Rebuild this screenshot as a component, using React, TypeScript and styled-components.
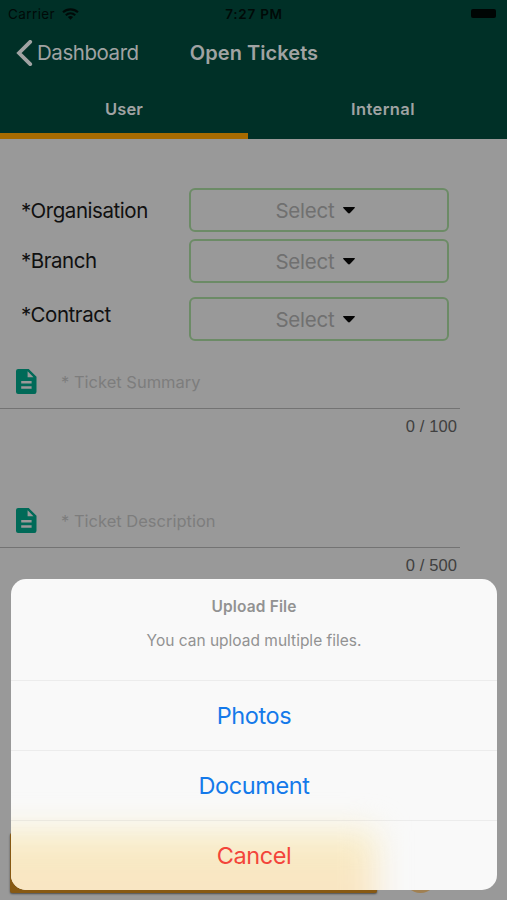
import React from "react";
import styled, { createGlobalStyle } from "styled-components";

const GlobalStyle = createGlobalStyle`
  *, *::before, *::after { box-sizing: border-box; }
  html, body { margin: 0; background: #999999; }
  body { font-family: Inter, "Liberation Sans", sans-serif; }
`;

const Screen = styled.div`
  position: relative;
  width: 507px;
  height: 900px;
  overflow: hidden;
  background: #999999;
`;

const Header = styled.header`
  height: 139px;
  background: #003027;
  color: #a0a3a3;
`;

const StatusBar = styled.div`
  display: grid;
  grid-template-columns: 1fr auto 1fr;
  align-items: center;
  height: 27px;
  padding: 0 11px 0 8px;
  color: #000a08;
`;

const Carrier = styled.div`
  display: flex;
  align-items: center;
  gap: 7px;
  font-size: 13.5px;
  letter-spacing: 0.4px;
`;

const Clock = styled.div`
  padding-left: 4px;
  font-size: 13.5px;
  font-weight: 600;
  letter-spacing: 0.75px;
`;

const Battery = styled.div`
  justify-self: end;
  width: 25px;
  height: 9px;
  border-radius: 2px;
  background: #000504;
`;

const NavBar = styled.div`
  display: grid;
  grid-template-columns: 1fr auto 1fr;
  align-items: center;
  height: 51px;
  padding: 0 15px 0 16px;
`;

const BackButton = styled.div`
  display: flex;
  align-items: center;
  gap: 4px;
  font-size: 20.5px;
  letter-spacing: -0.45px;
`;

const Title = styled.div`
  font-size: 20px;
  font-weight: 600;
  letter-spacing: 0.05px;
`;

const Tabs = styled.div`
  display: flex;
  height: 61px;
`;

const Tab = styled.div<{ $active?: boolean }>`
  width: ${(p) => (p.$active ? 248 : 259)}px;
  height: 61px;
  padding: 7px 0 ${(p) => (p.$active ? 0 : 6)}px ${(p) => (p.$active ? 0 : 11)}px;
  border-bottom: ${(p) => (p.$active ? "6px solid #a86b00" : "none")};
  display: flex;
  align-items: center;
  justify-content: center;
  font-size: 16.5px;
  font-weight: 600;
  letter-spacing: ${(p) => (p.$active ? 0.1 : 0.4)}px;
`;

const Form = styled.main`
  padding-top: 49px;
`;

const Field = styled.div<{ $gap: number; $shift: number }>`
  display: flex;
  height: 44px;
  margin-bottom: ${(p) => p.$gap}px;
  padding-left: 21px;
  align-items: center;

  & > label {
    width: 168px;
    padding-bottom: ${(p) => p.$shift}px;
  }
`;

const Label = styled.label`
  font-size: 20.5px;
  letter-spacing: -0.45px;
  color: #101010;
  white-space: nowrap;
`;

const SelectBox = styled.div`
  display: flex;
  align-items: center;
  justify-content: center;
  gap: 8px;
  width: 260px;
  height: 44px;
  padding-right: 8px;
  border: 1.5px solid #6c8b66;
  border-width: 2px;
  border-radius: 6px;
  color: #707070;
  font-size: 20.5px;
  letter-spacing: -0.2px;
`;

const InputRow = styled.div`
  display: flex;
  align-items: center;
  width: 460px;
  height: 54px;
  padding-left: 16px;
  gap: 24px;
  border-bottom: 1.5px solid #737373;
  color: #7d7d7d;
  font-size: 16.5px;
`;

const Counter = styled.div`
  width: 457px;
  height: 36px;
  line-height: 35px;
  text-align: right;
  font-size: 16.5px;
  font-family: "Liberation Sans", sans-serif;
  letter-spacing: 0.1px;
  color: #404040;
`;

const TextField = styled.section`
  height: 139px;
`;

const UploadBar = styled.div`
  position: absolute;
  left: 10px;
  top: 833px;
  width: 367px;
  height: 60px;
  border-radius: 2px;
  background: #875913;
  box-shadow: 0 1px 2px rgba(0, 0, 0, 0.5);
`;

const AddBadge = styled.div`
  position: absolute;
  left: 404px;
  top: 860px;
  width: 33px;
  height: 33px;
  border-radius: 50%;
  background: #a08052;
`;

const Sheet = styled.div`
  position: absolute;
  left: 11px;
  top: 579px;
  width: 486px;
  height: 311px;
  border-radius: 15px;
  overflow: hidden;
  background: #f9f9f9;
  text-align: center;
`;

const SheetGlow = styled.div`
  position: absolute;
  left: -60px;
  top: 252px;
  width: 425px;
  height: 120px;
  background: linear-gradient(#f8edc5, #f9e5c3 50%);
  filter: blur(16px);
`;

const SheetContent = styled.div`
  position: relative;
`;

const SheetHead = styled.div`
  height: 101px;
  padding-top: 18px;
  color: #929292;
`;

const SheetTitle = styled.div`
  font-size: 15.5px;
  line-height: 20px;
  font-weight: 600;
  letter-spacing: 0.15px;
`;

const SheetMessage = styled.div`
  margin-top: 14px;
  font-size: 15.5px;
  line-height: 20px;
`;

const SheetAction = styled.div<{ $danger?: boolean }>`
  height: 70px;
  border-top: 1px solid rgba(90, 90, 90, 0.08);
  line-height: 70px;
  font-size: 23.5px;
  letter-spacing: -0.42px;
  color: ${(p) => (p.$danger ? "#f3453a" : "#1479ea")};
`;

const WifiIcon = () => (
  <svg width="17" height="12" viewBox="0 0 17 12" fill="none" stroke="currentColor" strokeWidth="2.1">
    <path d="M1 4.3C5.2.4 11.8.4 16 4.3" />
    <path d="M3.8 7.2c2.7-2.4 6.7-2.4 9.4 0" />
    <path d="M5.9 8.9 8.5 11.8l2.6-2.9c-1.5-1.2-3.7-1.2-5.2 0Z" fill="currentColor" stroke="none" />
  </svg>
);

const ChevronIcon = () => (
  <svg width="17" height="26" viewBox="0 0 17 26" fill="none" stroke="currentColor" strokeWidth="3.8">
    <path d="M14.2 1.8 3 13l11.2 11.2" strokeLinejoin="miter" strokeLinecap="round" />
  </svg>
);

const CaretIcon = () => (
  <svg width="12" height="7" viewBox="0 0 12 7">
    <path d="M.8 0h10.4c.8 0 1 .6.5 1.1L7 6.1c-.6.6-1.4.6-2 0L.3 1.1C-.2.6 0 0 .8 0Z" fill="#050505" />
  </svg>
);

const DocumentIcon = () => (
  <svg width="21" height="25" viewBox="0 0 21 25">
    <path
      fillRule="evenodd"
      fill="#006a58"
      d="M2.5 0h10.2L20.5 7.7v14.8A2.4 2.4 0 0 1 18 25H2.5A2.4 2.4 0 0 1 0 22.5v-20A2.4 2.4 0 0 1 2.5 0ZM11.6 2.2v6.1h5.9ZM5.2 12v2.6h10.4v-2.6ZM5.2 17.2v2.6h10.4v-2.6Z"
    />
  </svg>
);

const fields = [
  { label: "*Organisation", gap: 7, shift: 0 },
  { label: "*Branch", gap: 14, shift: 2 },
  { label: "*Contract", gap: 14, shift: 9 },
];

const inputs = [
  { hint: "* Ticket Summary", count: "0 / 100" },
  { hint: "* Ticket Description", count: "0 / 500" },
];

export default function App() {
  return (
    <Screen>
      <GlobalStyle />
      <Header>
        <StatusBar>
          <Carrier>
            Carrier
            <WifiIcon />
          </Carrier>
          <Clock>7:27 PM</Clock>
          <Battery />
        </StatusBar>
        <NavBar>
          <BackButton>
            <ChevronIcon />
            Dashboard
          </BackButton>
          <Title>Open Tickets</Title>
        </NavBar>
        <Tabs>
          <Tab $active>User</Tab>
          <Tab>Internal</Tab>
        </Tabs>
      </Header>
      <Form>
        {fields.map((f) => (
          <Field key={f.label} $gap={f.gap} $shift={f.shift}>
            <Label>{f.label}</Label>
            <SelectBox>
              Select
              <CaretIcon />
            </SelectBox>
          </Field>
        ))}
        {inputs.map((i) => (
          <TextField key={i.hint}>
            <InputRow>
              <DocumentIcon />
              {i.hint}
            </InputRow>
            <Counter>{i.count}</Counter>
          </TextField>
        ))}
      </Form>
      <UploadBar />
      <AddBadge />
      <Sheet>
        <SheetGlow />
        <SheetContent>
          <SheetHead>
            <SheetTitle>Upload File</SheetTitle>
            <SheetMessage>You can upload multiple files.</SheetMessage>
          </SheetHead>
          <SheetAction>Photos</SheetAction>
          <SheetAction>Document</SheetAction>
          <SheetAction $danger>Cancel</SheetAction>
        </SheetContent>
      </Sheet>
    </Screen>
  );
}
